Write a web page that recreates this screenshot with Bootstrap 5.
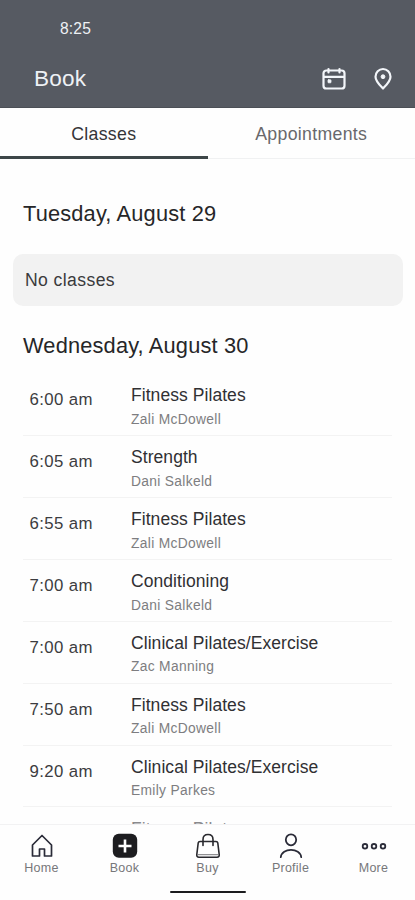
<!DOCTYPE html>
<html lang="en">
<head>
<meta charset="utf-8">
<meta name="viewport" content="width=device-width, initial-scale=1">
<title>Book</title>
<link href="https://cdn.jsdelivr.net/npm/bootstrap@5.3.0/dist/css/bootstrap.min.css" rel="stylesheet">
<style>
body{font-family:"Liberation Sans",Arial,sans-serif;background:#fefefe;color:#2b2b2d}
.phone{height:900px}
.app-header{height:108px;background:#565a62;color:#eef1f5;border-bottom:1px solid #4b4f56}
.clock{font-size:15.6px;line-height:18px;padding:20px 0 0 60px;letter-spacing:.15px}
.app-title{font-size:22.6px;line-height:26px;font-weight:400;letter-spacing:.2px}
.title-row{padding:28px 21px 0 34px}
.title-icons{gap:25px}
.tab-strip .nav-link{height:51px;font-size:17.7px;letter-spacing:.32px;line-height:52px;color:#68686c;border-bottom:1px solid #f0f1f2;border-radius:0}
.tab-strip .nav-link.active{color:#343438;border-bottom:3px solid #3d4648}
.day{font-size:21.8px;line-height:26px;font-weight:400;letter-spacing:.17px;color:#262628;padding-left:23px}
.day-first{margin-top:42px}
.day-next{margin-top:27px}
.empty-day{margin:27px 12px 0 13px;height:52px;line-height:52px;padding-left:12px;font-size:17.6px;letter-spacing:.4px;background:#f2f2f2;border-radius:10px;color:#3a3a3c}
.slots{margin:15.200px 23px 0}
.slot{height:61.9px;border-bottom:1px solid #f3f3f3}
.slot-time{width:108px;padding:16px 0 0 6.500px;font-size:16.8px;letter-spacing:.4px;line-height:20px;color:#3c3c3f}
.slot-name{font-size:17.5px;letter-spacing:.06px;line-height:20px;padding-top:11.200px;color:#303033}
.slot-coach{font-size:13.8px;letter-spacing:.32px;line-height:16px;margin-top:6.500px;color:#7d7d80}
.slot-peek .slot-name{padding-top:12px;color:#8a8a8d}
.bottom-bar{height:76px;background:#fefefe;border-top:1px solid #f2f2f3}
.bottom-bar a{font-size:12.5px;letter-spacing:.25px;line-height:14px;color:#77777a;padding-top:7px}
.bottom-bar svg{margin-bottom:1px}
.home-line{width:76px;height:2px;background:#1c1c1e;margin:0 auto 7px}
</style>
</head>
<body>
<div class="phone d-flex flex-column overflow-hidden">
  <header class="app-header flex-shrink-0">
    <div class="clock">8:25</div>
    <div class="title-row d-flex justify-content-between align-items-center">
      <h1 class="app-title m-0">Book</h1>
      <div class="title-icons d-flex">
        <svg width="26" height="26" viewBox="0 0 26 26" fill="none" stroke="#f3f6fa" stroke-width="2.2" stroke-linecap="round"><rect x="2.500" y="4.500" width="21" height="18" rx="2.8"/><path d="M3 10.800h20M7.500 3v3.500M18.500 3v3.500"/><rect x="7" y="13.800" width="3" height="3" rx=".6" fill="#f3f6fa" stroke-width=".8"/></svg>
        <svg width="22" height="26" viewBox="0 0 22 26" fill="none" stroke="#f3f6fa" stroke-width="2.2"><path d="M11 22.500C8 19.300 3.500 15.200 3.500 10.700A7.500 7.700 0 0 1 18.500 10.700C18.500 15.200 14 19.300 11 22.500Z" stroke-linejoin="round"/><circle cx="11" cy="10.700" r="1.900" fill="#f3f6fa" stroke-width="1"/></svg>
      </div>
    </div>
  </header>
  <nav class="nav nav-fill tab-strip flex-nowrap flex-shrink-0">
    <a class="nav-link active w-50 p-0" href="#">Classes</a>
    <a class="nav-link w-50 p-0" href="#">Appointments</a>
  </nav>
  <main class="flex-fill overflow-hidden">
    <h2 class="day day-first mb-0">Tuesday, August 29</h2>
    <div class="empty-day">No classes</div>
    <h2 class="day day-next mb-0">Wednesday, August 30</h2>
    <div class="slots">
      <div class="slot d-flex"><div class="slot-time">6:00 am</div><div><div class="slot-name">Fitness Pilates</div><div class="slot-coach">Zali McDowell</div></div></div>
      <div class="slot d-flex"><div class="slot-time">6:05 am</div><div><div class="slot-name">Strength</div><div class="slot-coach">Dani Salkeld</div></div></div>
      <div class="slot d-flex"><div class="slot-time">6:55 am</div><div><div class="slot-name">Fitness Pilates</div><div class="slot-coach">Zali McDowell</div></div></div>
      <div class="slot d-flex"><div class="slot-time">7:00 am</div><div><div class="slot-name">Conditioning</div><div class="slot-coach">Dani Salkeld</div></div></div>
      <div class="slot d-flex"><div class="slot-time">7:00 am</div><div><div class="slot-name">Clinical Pilates/Exercise</div><div class="slot-coach">Zac Manning</div></div></div>
      <div class="slot d-flex"><div class="slot-time">7:50 am</div><div><div class="slot-name">Fitness Pilates</div><div class="slot-coach">Zali McDowell</div></div></div>
      <div class="slot d-flex"><div class="slot-time">9:20 am</div><div><div class="slot-name">Clinical Pilates/Exercise</div><div class="slot-coach">Emily Parkes</div></div></div>
      <div class="slot slot-peek d-flex"><div class="slot-time"></div><div><div class="slot-name">Fitness Pilates</div></div></div>
    </div>
  </main>
  <footer class="bottom-bar flex-shrink-0 d-flex flex-column justify-content-between">
    <nav class="d-flex">
      <a href="#" class="col d-flex flex-column align-items-center text-decoration-none"><svg width="28" height="28" viewBox="0 0 28 28" fill="none" stroke="#2a2b38" stroke-width="1.700" stroke-linejoin="round"><path d="M4.500 13L14 3.500L23.500 13V24H16.500V17H11.500V24H4.500Z"/></svg>Home</a>
      <a href="#" class="col d-flex flex-column align-items-center text-decoration-none"><svg width="28" height="28" viewBox="0 0 28 28"><rect x="1.800" y="1.800" width="24.400" height="24" rx="6" fill="#1d1d20"/><path d="M14 7.500v13M7.500 14h13" stroke="#fff" stroke-width="2.600"/></svg>Book</a>
      <a href="#" class="col d-flex flex-column align-items-center text-decoration-none"><svg width="28" height="28" viewBox="0 0 28 28" fill="none" stroke="#29292e" stroke-width="1.600" stroke-linecap="round" stroke-linejoin="round"><path d="M6 9.500H22Q23.500 9.500 23.800 11L25.200 22.500Q25.500 25.200 23 25.200H5Q2.500 25.200 2.800 22.500L4.200 11Q4.500 9.500 6 9.500Z"/><path d="M3.500 22.700H24.500" stroke="#77777a" stroke-width="1"/><path d="M9 13.500V7.500Q9 2.500 14 2.500T19 7.500V13.500"/></svg>Buy</a>
      <a href="#" class="col d-flex flex-column align-items-center text-decoration-none"><svg width="28" height="28" viewBox="0 0 28 28" fill="none" stroke="#2a2b38" stroke-width="1.800" stroke-linecap="round"><ellipse cx="14" cy="7.800" rx="5.200" ry="5.500"/><path d="M3.800 25.200C4.600 15.400 23.400 15.400 24.200 25.200"/></svg>Profile</a>
      <a href="#" class="col d-flex flex-column align-items-center text-decoration-none"><svg width="28" height="28" viewBox="0 0 28 28" fill="none" stroke="#2a2b38" stroke-width="1.800"><circle cx="5" cy="14.300" r="2.300"/><circle cx="14" cy="14.300" r="2.300"/><circle cx="23" cy="14.300" r="2.300"/></svg>More</a>
    </nav>
    <div class="home-line rounded-pill"></div>
  </footer>
</div>
<script src="https://cdn.jsdelivr.net/npm/bootstrap@5.3.0/dist/js/bootstrap.bundle.min.js"></script>
</body>
</html>
